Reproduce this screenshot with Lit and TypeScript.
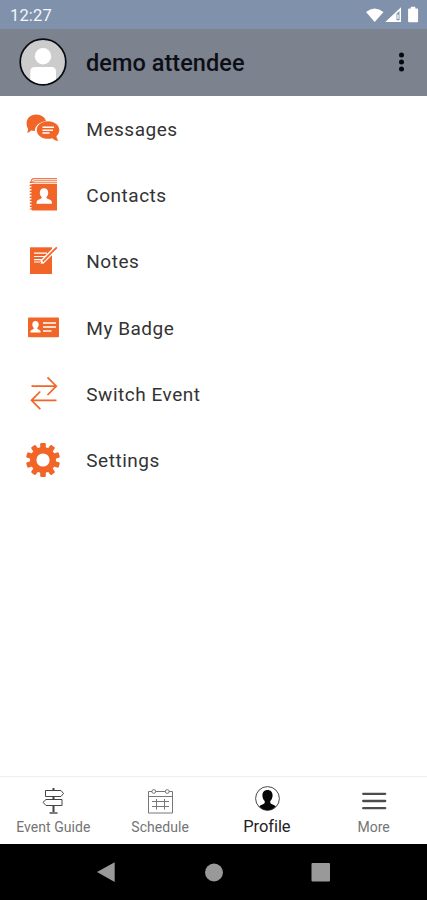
import { LitElement, html, css, svg } from "lit";
import { customElement } from "lit/decorators.js";

const gearTeeth = Array.from({ length: 10 }, (_, i) => i * 36);

const messages = svg`
  <path fill="#f26528" d="M13 5.500c5.400 0 9.400 3 10 6.800-6.600.500-11 4.500-11.200 9.700-1.500 0-2.700-.2-3.800-.5-1 1.200-2.200 2-4 2.300.8-1.400 1.200-2.600 1-4.200C4 18.200 3.600 16.500 3.600 14.200 3.600 9.400 7.500 5.500 13 5.500z"/>
  <path fill="#f26528" d="M25 12.200c6.300 0 11.300 3.700 11.300 8.700 0 2.600-1.200 4.600-2.800 6.100.1 2 .7 3.300 2.100 4.800-2.800-.1-4.700-.9-6.300-2.600-1.300.4-2.700.6-4.300.6-6.300 0-11.300-3.900-11.300-8.900s5-8.700 11.300-8.700z"/>
  <path stroke="#fff" stroke-width="1.500" d="M19.500 18.300h11.500M19.500 21.200h10.500M19.500 24.100h7"/>`;

const contacts = svg`
  <path fill="none" stroke="#f07a4a" stroke-width="1.100" d="M34 3.600H11Q8.200 3.900 8.200 6.500M34 5.700H12Q9.500 6 9 8M34 7.700H10"/>
  <path fill="#f26528" d="M8.500 9H34v26.500H9.500Q8.500 35.500 8.500 34.500z"/>
  <path stroke="#f26528" stroke-width="2.200" stroke-dasharray="1.500 1.500" d="M7.900 6.500v28"/>
  <path fill="#fff" d="M21 13.300c2.800 0 4.200 1.900 4.200 4.400 0 1.900-.7 3.400-1.900 4.500.1 1.200 1.200 1.600 3 2.200 1.900.6 2.700 1.500 2.700 4.300H13.500c0-2.800.8-3.700 2.600-4.300 1.800-.6 2.700-1 2.700-2.200-1.300-1.100-2-2.600-2-4.500 0-2.500 1.400-4.400 4.200-4.400z"/>`;

const notes = svg`
  <path fill="#f26528" d="M7 6.300h22V33H7z"/>
  <path stroke="#fff" stroke-width="1.200" d="M11 12.200h13M11 15.500h11M11 18.700h8M11 21h6"/>
  <path stroke="#fff" stroke-width="4.500" d="M18.500 21.500L31 9"/>
  <path stroke="#f26528" stroke-width="1.800" d="M19.800 20.300L33.800 6.300"/>
  <path fill="#fff" d="M17.500 23l1-3.500 2.300 2.200z"/>`;

const badge = svg`
  <rect x="5" y="9.500" width="31" height="19.700" rx="1" fill="#f26528"/>
  <path fill="#fff" d="M12.500 13c2 0 3.200 1.300 3.200 3.500 0 1.500-.6 2.700-1.500 3.500 0 1 .8 1.400 1.900 1.700 1.200.4 1.600 1.200 1.600 2.800H7.300c0-1.600.5-2.400 1.600-2.800 1.200-.3 1.900-.7 1.900-1.700-.9-.8-1.500-2-1.500-3.500 0-2.200 1.200-3.500 3.200-3.500z"/>
  <path stroke="#fff" stroke-width="1.500" d="M20 15h13M20 19h13M20 23h8.500"/>`;

const swap = svg`
  <path fill="none" stroke="#f26528" stroke-width="1.700" d="M8.500 12.200h24.500M24.500 3.300l8.800 8.900-8.800 8.800M33.500 26.300H9M17.300 17.500l-8.800 8.800 8.800 8.900"/>`;

const gear = svg`
  <circle cx="20" cy="20" r="9.800" fill="none" stroke="#f26528" stroke-width="6.400"/>
  ${gearTeeth.map((a) => svg`<path fill="#f26528" transform=${`rotate(${a} 20 20)`}
    d="M17.200 8.500V4.300Q17.200 2.900 18.500 2.900H21.500Q22.800 2.900 22.800 4.300V8.500z"/>`)}`;

const signpost = svg`
  <g fill="#fff" stroke="#444" stroke-width="1">
    <path d="M14.500 1v3M14.500 10v3M14.500 18v7" stroke-width="2"/>
    <path d="M6.500 3.500h15.500l2.500 2.900-2.500 3.100H6.500zM23 12.500H7L4 15.300l3 3.200h16z"/>
    <path d="M10.500 26h8" stroke-width="1.400"/>
  </g>`;

const calendar = svg`
  <g fill="none" stroke="#777" stroke-width="1">
    <path d="M6 4.500H2.500v21.500h24v-21.500H23M9.500 4.500h10M2.500 9.500h24"/>
    <circle cx="7.800" cy="4.500" r="1.900"/><circle cx="21.200" cy="4.500" r="1.900"/>
    <path d="M6 14.500h17M6 19.500h17M10.500 12v10.500M18.500 12v10.500"/>
  </g>`;

const person = svg`
  <circle cx="14.500" cy="12.500" r="11.900" fill="#fff" stroke="#333" stroke-width=".9"/>
  <path fill="#050505" transform="translate(.5 -.5)" d="M14 4.500c3.200 0 5.100 2.200 5.100 5.300 0 2.600-1 4.600-2.300 5.800v2c.5 1.200 3.800 1.600 5.500 3.200A11.700 11.700 0 0 1 14 24.800a11.700 11.700 0 0 1-8.300-4c1.700-1.600 5-2 5.500-3.200v-2C9.900 14.400 8.900 12.400 8.900 9.800c0-3.100 1.900-5.300 5.100-5.300z"/>`;

const bars = svg`<path stroke="#4c4c4c" stroke-width="2.300" stroke-linecap="round" d="M3.200 6.800h22M3.200 14h22M3.200 21.200h22"/>`;

const rows = [
  { icon: messages, label: "Messages", key: "messages" },
  { icon: contacts, label: "Contacts", key: "contacts" },
  { icon: notes, label: "Notes", key: "notes" },
  { icon: badge, label: "My Badge", key: "badge" },
  { icon: swap, label: "Switch Event", key: "switch" },
  { icon: gear, label: "Settings", key: "settings" },
];

const tabs = [
  { icon: signpost, label: "Event Guide", key: "guide" },
  { icon: calendar, label: "Schedule", key: "schedule" },
  { icon: person, label: "Profile", key: "active" },
  { icon: bars, label: "More", key: "more" },
];

@customElement("app-root")
export class AppRoot extends LitElement {
  static styles = css`
    :host { display: flex; flex-direction: column; width: 100%; height: 100vh; background: #fff;
      font-family: Roboto, sans-serif; overflow: hidden; }
    * { box-sizing: border-box; }
    svg { display: block; flex: none; }
    .status { height: 29px; flex: none; background: #8091ac; color: #f4f7fc; display: flex;
      align-items: center; justify-content: space-between; padding: 2px 6px 0 10px;
      font-size: 16.500px; letter-spacing: .15px; }
    .header { height: 66.500px; flex: none; background: #7c828e; display: flex; align-items: center;
      padding: 0 16px 0 19px; }
    .name { flex: 1; margin-left: 19px; font-size: 23.500px; font-weight: 500; color: #0c0f15;
      letter-spacing: .050px; line-height: 30px; padding-top: 2px; }
    .list { flex: 1; }
    .row { height: 66.300px; display: flex; align-items: center; padding-left: 23px; }
    .label { margin-left: 23.300px; font-size: 19px; letter-spacing: .520px; color: #333;
      line-height: 24px; padding-top: 2px; }
    .tabs { height: 68px; flex: none; display: grid; grid-template-columns: repeat(4, 1fr);
      border-top: 1px solid #eee; }
    .tab { display: flex; flex-direction: column; align-items: center; padding-top: 10px;
      font-size: 14px; line-height: 18px; letter-spacing: .050px; color: #747474; gap: 3px; }
    .tab.active { font-size: 16.500px; color: #222; padding-top: 9px; gap: 4px; letter-spacing: -.050px; }
    .nav { height: 56px; flex: none; background: #000; }
  `;

  render() {
    return html`
      <div class="status">
        <span>12:27</span>
        <svg width="56" height="20" viewBox="0 0 56 20">
          <path fill="#fff" d="M1 6Q9.500-1.200 18.500 6L9.700 16z"/>
          <path fill="#fff" fill-rule="evenodd" d="M20.300 16L36 1.300V16zM31.500 7.700v6.500h3V5z"/>
          <path fill="#fff" d="M32.300 8.500h1.300V13h-1.300z"/>
          <path fill="#fff" d="M45.800.800h4.500v1.700h1.800q1 0 1 1V15.300q0 1-1 1h-8q-1 0-1-1V3.500q0-1 1-1h1.700z"/>
        </svg>
      </div>
      <div class="header">
        <svg width="48" height="48" viewBox="0 0 48 48">
          <circle cx="24" cy="24" r="22.800" fill="#ccc" stroke="#080b10" stroke-width="1.700"/>
          <circle cx="24" cy="18.200" r="8.200" fill="#fff"/>
          <path fill="#fff" d="M11.300 41.500V34Q11.300 29 16 29H32.500Q37 29 37 34V41.300Q31 46 24 46T11.300 41.500z"/>
        </svg>
        <span class="name">demo attendee</span>
        <svg width="20" height="24" viewBox="0 0 20 24">
          <g fill="#05080d"><circle cx="10.500" cy="5" r="2.500"/><circle cx="10.500" cy="12" r="2.500"/><circle cx="10.500" cy="19" r="2.500"/></g>
        </svg>
      </div>
      <div class="list">
        ${rows.map((r) => html`<div class="row">
          <svg width="40" height="40" viewBox="0 0 40 40">${r.icon}</svg>
          <span class="label ${r.key}">${r.label}</span></div>`)}
      </div>
      <div class="tabs">
        ${tabs.map((t) => html`<div class="tab ${t.key}">
          <svg width="28" height="28" viewBox="0 0 28 28">${t.icon}</svg>
          <span>${t.label}</span></div>`)}
      </div>
      <div class="nav">
        <svg width="427" height="56" viewBox="0 0 427 56">
          <g fill="#999"><path d="M97 28L114.700 18.300V38z"/><circle cx="214" cy="28.500" r="9"/>
          <rect x="311.500" y="19" width="18.500" height="18.500" rx="1"/></g>
        </svg>
      </div>`;
  }
}
